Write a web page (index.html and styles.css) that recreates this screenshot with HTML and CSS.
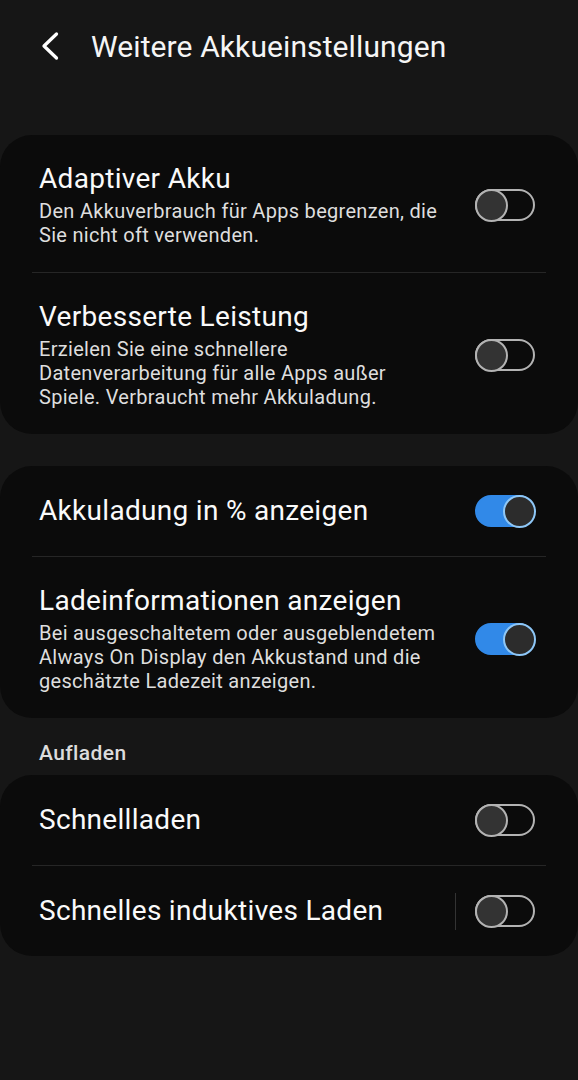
FILE: index.html
```html
<!DOCTYPE html>
<html lang="de">
<head>
    <meta charset="UTF-8">
    <meta name="viewport" content="width=device-width, initial-scale=1.0">
    <title>Weitere Akkueinstellungen</title>
    <link rel="stylesheet" href="styles.css">
</head>
<body>

<div class="header">
    <svg class="back" width="20" height="30" viewBox="0 0 20 30">
        <path d="M16.5 3 L4 15 L16.5 27" fill="none" stroke="#ffffff" stroke-width="3.3" stroke-linecap="round" stroke-linejoin="round"/>
    </svg>
    <h1>Weitere Akkueinstellungen</h1>
</div>

<div class="card">
    <div class="row">
        <div class="text">
            <div class="title">Adaptiver Akku</div>
            <div class="sub">Den Akkuverbrauch für Apps begrenzen, die Sie nicht oft verwenden.</div>
        </div>
        <div class="switch"><span class="knob"></span></div>
    </div>
    <div class="divider"></div>
    <div class="row">
        <div class="text">
            <div class="title">Verbesserte Leistung</div>
            <div class="sub">Erzielen Sie eine schnellere<br>Datenverarbeitung für alle Apps außer Spiele. Verbraucht mehr Akkuladung.</div>
        </div>
        <div class="switch"><span class="knob"></span></div>
    </div>
</div>

<div class="card">
    <div class="row single">
        <div class="text">
            <div class="title">Akkuladung in % anzeigen</div>
        </div>
        <div class="switch on"><span class="knob"></span></div>
    </div>
    <div class="divider"></div>
    <div class="row">
        <div class="text">
            <div class="title">Ladeinformationen anzeigen</div>
            <div class="sub">Bei ausgeschaltetem oder ausgeblendetem Always On Display den Akkustand und die geschätzte Ladezeit anzeigen.</div>
        </div>
        <div class="switch on"><span class="knob"></span></div>
    </div>
</div>

<div class="section">Aufladen</div>

<div class="card">
    <div class="row single">
        <div class="text">
            <div class="title">Schnellladen</div>
        </div>
        <div class="switch"><span class="knob"></span></div>
    </div>
    <div class="divider"></div>
    <div class="row single">
        <div class="text">
            <div class="title">Schnelles induktives Laden</div>
        </div>
        <div class="vline"></div>
        <div class="switch"><span class="knob"></span></div>
    </div>
</div>

</body>
</html>
```

FILE: styles.css
```css
body {
    margin: 0;
    background-color: #161616;
    font-family: Roboto, "Noto Sans", sans-serif;
    color: #fafafa;
}
.header {
    display: flex;
    align-items: center;
    height: 92px;
    padding-left: 40px;
    margin-bottom: 43px;
}
.back {
    margin-right: 31px;
}
h1 {
    margin: 0;
    font-size: 30px;
    font-weight: 400;
    letter-spacing: 0.1px;
    color: #f5f5f5;
}
.card {
    background-color: #0b0b0b;
    border-radius: 32px;
    margin-bottom: 32px;
}
.row {
    display: flex;
    align-items: center;
    padding: 27px 43px 25px 39px;
}
.row.single {
    min-height: 90px;
    padding-top: 0;
    padding-bottom: 0;
    box-sizing: border-box;
}
.text {
    flex: 1;
    padding-right: 24px;
}
.title {
    font-size: 28px;
    line-height: 34px;
    letter-spacing: 0.3px;
}
.sub {
    font-size: 20px;
    line-height: 24px;
    letter-spacing: 0.3px;
    color: #dedede;
    margin-top: 3px;
}
.divider {
    height: 1px;
    background-color: #262626;
    margin: 0 32px;
}
.vline {
    width: 1px;
    height: 37px;
    background-color: #333;
    margin-right: 19px;
}
.switch {
    position: relative;
    width: 60px;
    height: 32px;
    box-sizing: border-box;
    border: 2px solid #b3b3b3;
    border-radius: 16px;
    flex-shrink: 0;
}
.knob {
    position: absolute;
    left: -2px;
    top: -2px;
    width: 33px;
    height: 33px;
    box-sizing: border-box;
    border-radius: 50%;
    background-color: #333;
    border: 2px solid #b3b3b3;
}
.switch.on {
    background-color: #3189e8;
    border-color: #3189e8;
}
.switch.on .knob {
    left: auto;
    right: -3px;
    background-color: #2c2c2c;
    border-color: #8ec7f7;
}
.section {
    font-size: 21px;
    font-weight: 500;
    letter-spacing: 0.4px;
    color: #dcdcdc;
    padding: 0 39px;
    margin-top: -12px;
    height: 30px;
    display: flex;
    align-items: center;
    margin-bottom: 7px;
}
```
